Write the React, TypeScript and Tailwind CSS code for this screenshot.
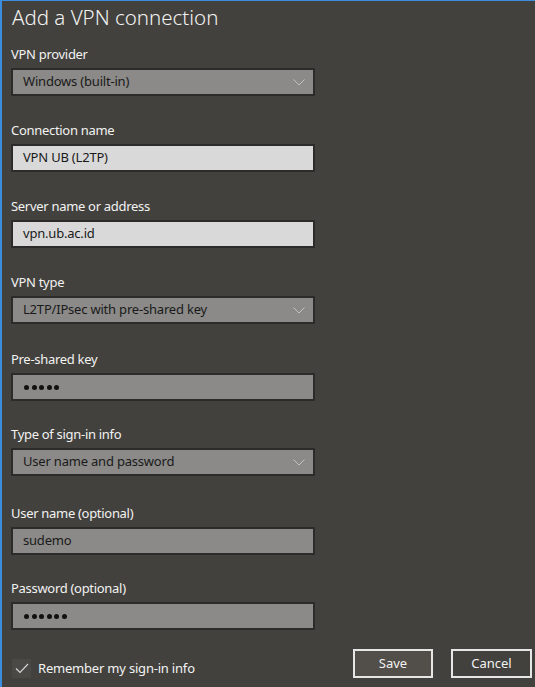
import React from "react";

const font = { fontFamily: '"Noto Sans", "Open Sans", sans-serif' };

function Label({ text, mt }: { text: string; mt: string }) {
  return (
    <div className={`${mt} h-[18px] text-[13px] leading-[18px] tracking-[-0.3px] text-[#f2f2f2]`}>{text}</div>
  );
}

function Chevron() {
  return (
    <svg width="12" height="7" viewBox="0 0 12 7" className="shrink-0">
      <path d="M0.5 0.5 L6 6 L11.5 0.5" fill="none" stroke="#c8c8c8" strokeWidth="0.9" />
    </svg>
  );
}

function Dropdown({ value }: { value: string }) {
  return (
    <div className="mt-[5px] flex h-[28px] w-[304px] items-center justify-between border-2 border-[#2c2b29] bg-[#8b8a88] pl-[10px] pr-[8px] text-[13px] tracking-[-0.2px] text-[#1a1a1a]">
      <span>{value}</span>
      <Chevron />
    </div>
  );
}

function TextBox({ value, light }: { value: string; light?: boolean }) {
  return (
    <div
      className={`mt-[5px] flex h-[28px] w-[304px] items-center border-2 border-[#2c2b29] pl-[10px] text-[13px] tracking-[-0.2px] text-[#1a1a1a] ${
        light ? "bg-[#d9d9d9]" : "bg-[#8b8a88]"
      }`}
    >
      {value}
    </div>
  );
}

function Dots({ n }: { n: number }) {
  return (
    <div className="mt-[5px] flex h-[28px] w-[304px] items-center gap-[2.5px] border-2 border-[#2c2b29] bg-[#8b8a88] pl-[11px]">
      {Array.from({ length: n }).map((_, i) => (
        <span key={i} className="h-[5px] w-[5px] rounded-full bg-[#111]" />
      ))}
    </div>
  );
}

export default function App() {
  return (
    <div
      style={font}
      className="flex h-[687px] w-[535px] flex-col border-l-2 border-t border-[#3b8de0] bg-[#42413d] pl-[9px] pr-[3px]"
    >
      <div className="mt-[2px] h-[28px] pl-[1px] text-[20.5px] font-light leading-[28px] text-[#f2f2f2]">
        Add a VPN connection
      </div>

      <Label text="VPN provider" mt="mt-[14px]" />
      <Dropdown value="Windows (built-in)" />

      <Label text="Connection name" mt="mt-[25px]" />
      <TextBox value="VPN UB (L2TP)" light />

      <Label text="Server name or address" mt="mt-[25px]" />
      <TextBox value="vpn.ub.ac.id" light />

      <Label text="VPN type" mt="mt-[25px]" />
      <Dropdown value="L2TP/IPsec with pre-shared key" />

      <Label text="Pre-shared key" mt="mt-[26px]" />
      <Dots n={5} />

      <Label text="Type of sign-in info" mt="mt-[24px]" />
      <Dropdown value="User name and password" />

      <Label text="User name (optional)" mt="mt-[28px]" />
      <TextBox value="sudemo" />

      <Label text="Password (optional)" mt="mt-[24px]" />
      <Dots n={6} />

      <div className="mt-[19px] flex items-center justify-between">
        <div className="mt-[10px] flex items-center">
          <div className="ml-[1px] flex h-[19px] w-[19px] items-center justify-center bg-[#4a4945]">
            <svg width="14" height="11" viewBox="0 0 14 11">
              <path d="M1 5.5 L5 9.5 L13 1" fill="none" stroke="#d8d8d8" strokeWidth="1.1" />
            </svg>
          </div>
          <span className="ml-[7px] text-[13px] tracking-[-0.2px] text-[#f2f2f2]">Remember my sign-in info</span>
        </div>
        <div className="flex gap-[18px]">
          <div className="flex h-[29px] w-[80px] items-center justify-center border-2 border-[#e6e6e6] bg-[#524e4a] text-[13px] text-[#f2f2f2]">
            Save
          </div>
          <div className="flex h-[29px] w-[81px] items-center justify-center border-2 border-[#e6e6e6] bg-[#42413d] text-[13px] text-[#f2f2f2]">
            Cancel
          </div>
        </div>
      </div>
    </div>
  );
}
